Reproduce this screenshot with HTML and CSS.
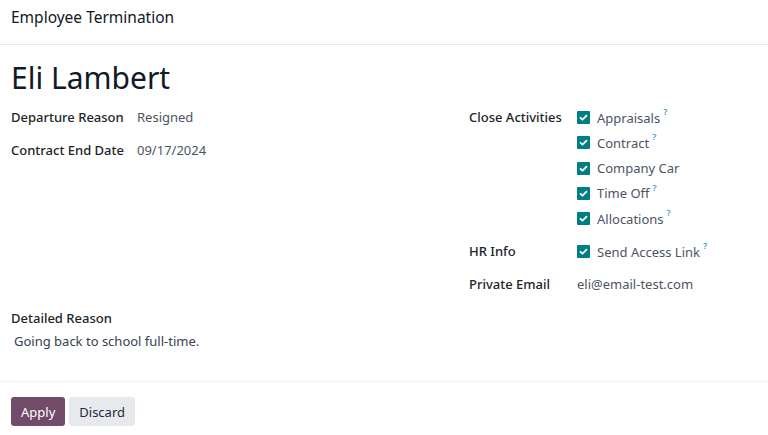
FILE: index.html
```html
<!DOCTYPE html>
<html>
<head>
<meta charset="utf-8">
<link rel="stylesheet" href="styles.css">
</head>
<body>
<div class="dialog">
  <header class="modal-header">Employee Termination</header>
  <main class="modal-body">
    <h1 class="name">Eli Lambert</h1>
    <div class="cols">
      <div class="col">
        <div class="row"><div class="label">Departure Reason</div><div class="value">Resigned</div></div>
        <div class="row"><div class="label">Contract End Date</div><div class="value">09/17/2024</div></div>
      </div>
      <div class="col right">
        <div class="row multi">
          <div class="label">Close Activities</div>
          <div class="checks">
            <div class="check"><span class="box"><svg viewBox="0 0 13 13"><path d="M3.5 6.8l2 1.9 4-4" /></svg></span>Appraisals<sup class="help">?</sup></div>
            <div class="check"><span class="box"><svg viewBox="0 0 13 13"><path d="M3.5 6.8l2 1.9 4-4" /></svg></span>Contract<sup class="help">?</sup></div>
            <div class="check"><span class="box"><svg viewBox="0 0 13 13"><path d="M3.5 6.8l2 1.9 4-4" /></svg></span>Company Car</div>
            <div class="check"><span class="box"><svg viewBox="0 0 13 13"><path d="M3.5 6.8l2 1.9 4-4" /></svg></span>Time Off<sup class="help">?</sup></div>
            <div class="check"><span class="box"><svg viewBox="0 0 13 13"><path d="M3.5 6.8l2 1.9 4-4" /></svg></span>Allocations<sup class="help">?</sup></div>
          </div>
        </div>
        <div class="row">
          <div class="label">HR Info</div>
          <div class="checks">
            <div class="check"><span class="box"><svg viewBox="0 0 13 13"><path d="M3.5 6.8l2 1.9 4-4" /></svg></span>Send Access Link<sup class="help">?</sup></div>
          </div>
        </div>
        <div class="row"><div class="label">Private Email</div><div class="value">eli@email-test.com</div></div>
      </div>
    </div>
    <div class="reason">
      <div class="reason-label">Detailed Reason</div>
      <div class="reason-text">Going back to school full-time.</div>
    </div>
  </main>
  <footer class="modal-footer">
    <button class="btn primary">Apply</button>
    <button class="btn secondary">Discard</button>
  </footer>
</div>
</body>
</html>
```

FILE: styles.css
```css
* { box-sizing: border-box; }
html, body { margin: 0; padding: 0; background: #fff; }
body {
  font-family: "Noto Sans", "Open Sans", sans-serif;
  font-size: 13px;
  color: #374151;
}
.dialog { width: 768px; height: 435px; display: flex; flex-direction: column; }
.modal-header {
  height: 45px;
  padding: 6px 11px 0;
  font-size: 15.5px;
  color: #111827;
  border-bottom: 1px solid #e7e9ed;
}
.modal-body { padding: 14px 11px 0; flex: 1; }
.name {
  margin: 0;
  font-size: 30px;
  font-weight: 400;
  line-height: 38px;
  color: #111827;
}
.cols { display: flex; margin-top: 8px; }
.col { flex: 0 0 458px; }
.col.right { flex: 1; }
.row { display: flex; min-height: 33px; }
.row.multi { padding-bottom: 8px; }
.label {
  width: 126px;
  font-weight: 500;
  color: #212529;
  line-height: 25px;
}
.right .label { width: 108px; }
.value { color: #4b5563; line-height: 25px; }
.checks { display: flex; flex-direction: column; }
.check {
  display: flex; align-items: center;
  height: 25.25px;
  line-height: 18px;
  color: #4b5563;
}
.box {
  width: 13px; height: 13px;
  background: #017e84;
  border-radius: 1px;
  margin-right: 7px;
  display: inline-flex;
}
.box svg { width: 13px; height: 13px; }
.box path { fill: none; stroke: #fff; stroke-width: 1.8; stroke-linecap: round; stroke-linejoin: round; }
.help {
  color: #3d9cc4;
  font-size: 9px;
  font-weight: 600;
  margin-left: 3px;
  align-self: flex-start;
  line-height: 10px;
  margin-top: 2px;
}
.reason { margin-top: 4px; }
.reason-label { color: #212529; font-weight: 500; line-height: 18px; }
.reason-text { color: #374151; padding: 5px 3px; line-height: 18px; }
.modal-footer {
  border-top: 1px solid #eef0f2;
  height: 54px;
  padding: 15px 11px 0;
  display: flex; gap: 4px; align-items: flex-start;
}
.btn {
  font-family: inherit; font-size: 13px;
  height: 29px; border: none; border-radius: 3px;
  padding: 0 10px;
}
.primary { background: #714b67; color: #fff; }
.secondary { background: #e7e9ed; color: #1f2937; }
```
